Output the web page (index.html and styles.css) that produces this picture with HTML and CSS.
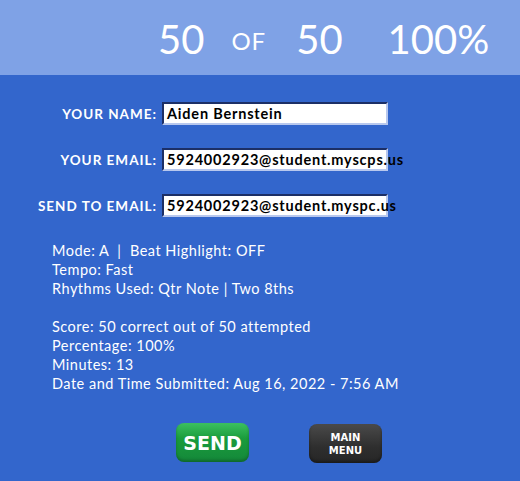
FILE: index.html
```html
<!DOCTYPE html>
<html>
<head>
<meta charset="utf-8">
<link rel="stylesheet" href="styles.css">
</head>
<body>
<div class="page">
  <header class="topbar">
    <span class="big">50</span>
    <span class="of">OF</span>
    <span class="big">50</span>
    <span class="big pct">100%</span>
  </header>
  <main class="content">
    <form class="form">
      <div class="row">
        <label class="lbl">YOUR NAME:</label>
        <div class="box">Aiden Bernstein</div>
      </div>
      <div class="row">
        <label class="lbl">YOUR EMAIL:</label>
        <div class="box">5924002923@student.myscps.us</div>
      </div>
      <div class="row">
        <label class="lbl">SEND TO EMAIL:</label>
        <div class="box">5924002923@student.myspc.us</div>
      </div>
    </form>
    <div class="info">
      <p>Mode: A &nbsp;|&nbsp; Beat Highlight: OFF</p>
      <p>Tempo: Fast</p>
      <p>Rhythms Used: Qtr Note | Two 8ths</p>
      <p class="gap">Score: 50 correct out of 50 attempted</p>
      <p>Percentage: 100%</p>
      <p>Minutes: 13</p>
      <p>Date and Time Submitted: Aug 16, 2022 - 7:56 AM</p>
    </div>
    <div class="buttons">
      <button class="btn send">SEND</button>
      <button class="btn menu">MAIN<br>MENU</button>
    </div>
  </main>
</div>
</body>
</html>
```

FILE: styles.css
```css
* { box-sizing: border-box; }
html, body { margin: 0; padding: 0; }
body {
  width: 520px;
  height: 481px;
  background: #3366cc;
  font-family: "Lato", "DejaVu Sans", sans-serif;
  color: #fff;
  overflow: hidden;
}
.page { display: flex; flex-direction: column; height: 481px; }
.topbar {
  height: 75px;
  background: #7fa2e6;
  display: flex;
  align-items: center;
  padding-left: 158px;
  padding-top: 2px;
}
.big { font-size: 40px; font-weight: 400; line-height: 1; }
.of { font-size: 24px; margin: 0 30px 0 27px; padding-top: 4px; letter-spacing: 1px; }
.pct { margin-left: 45px; }
.content { padding-top: 27px; }
.form { display: flex; flex-direction: column; gap: 23px; }
.row { display: flex; align-items: center; height: 23px; }
.lbl {
  width: 162px;
  text-align: right;
  padding-right: 5px;
  font-weight: 700;
  font-size: 13.5px;
  letter-spacing: 1px;
}
.box {
  width: 226px;
  height: 23px;
  background: #fff;
  color: #000;
  font-weight: 700;
  font-size: 14.5px;
  letter-spacing: 0.8px;
  line-height: 19px;
  padding-left: 3px;
  white-space: nowrap;
  overflow: visible;
  border-top: 2px solid #1c2f66;
  border-left: 2px solid #1c2f66;
  border-bottom: 2px solid #b8c8ee;
  border-right: 2px solid #b8c8ee;
}
.info {
  margin-top: 24px;
  padding-left: 52px;
  font-size: 14.5px;
  letter-spacing: 0.5px;
  line-height: 19px;
}
.info p { margin: 0; }
.info .gap { margin-top: 19px; }
.buttons {
  display: flex;
  padding-left: 176px;
  margin-top: 30px;
  gap: 60px;
  align-items: flex-start;
}
.btn {
  width: 73px;
  height: 39px;
  border: none;
  border-radius: 8px;
  color: #fff;
  font-family: "DejaVu Sans", sans-serif;
  font-weight: 700;
  padding: 0;
}
.send {
  background: linear-gradient(#3cc060, #1a9c3c 40%, #14883a);
  font-size: 19px;
  box-shadow: inset 0 -2px 3px rgba(0,0,0,0.25);
}
.menu {
  margin-top: 1px;
  background: linear-gradient(#4a4a4a, #2e2e2e 60%, #262626);
  font-size: 10px;
  line-height: 13px;
  box-shadow: inset 0 -2px 3px rgba(0,0,0,0.35);
}
```
